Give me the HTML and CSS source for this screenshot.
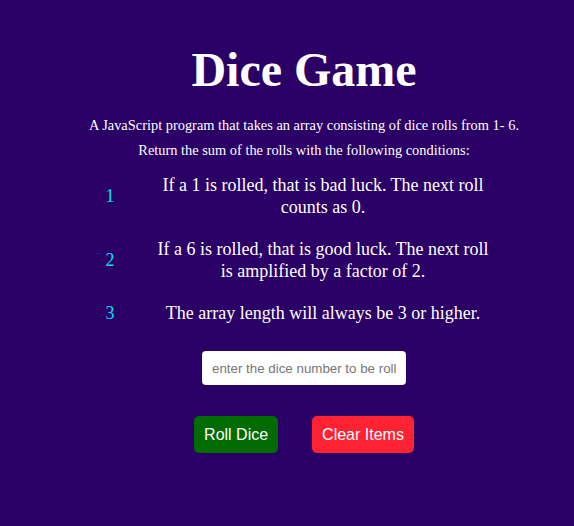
FILE: index.html
```html
<!DOCTYPE html>
<html>
<head>
<meta charset="utf-8">
<link rel="stylesheet" href="styles.css">
</head>
<body>
<main class="game">
  <h1 class="title">Dice Game</h1>
  <p class="intro">A JavaScript program that takes an array consisting of dice rolls from 1- 6.</p>
  <p class="intro">Return the sum of the rolls with the following conditions:</p>
  <ul class="rules">
    <li class="rule"><span class="num">1</span><span class="text">If a 1 is rolled, that is bad luck. The next roll counts as 0.</span></li>
    <li class="rule"><span class="num">2</span><span class="text">If a 6 is rolled, that is good luck. The next roll is amplified by a factor of 2.</span></li>
    <li class="rule"><span class="num">3</span><span class="text">The array length will always be 3 or higher.</span></li>
  </ul>
  <input class="dice-input" type="text" placeholder="enter the dice number to be rolled">
  <div class="actions">
    <button class="btn btn-roll">Roll Dice</button>
    <button class="btn btn-clear">Clear Items</button>
  </div>
</main>
</body>
</html>
```

FILE: styles.css
```css
html, body {
  margin: 0;
  padding: 0;
  background: #2a0066;
}
body {
  font-family: "Liberation Serif", "Times New Roman", serif;
  color: #ffffff;
  height: 526px;
}
.game {
  display: flex;
  flex-direction: column;
  align-items: center;
  padding-left: 34px;
  padding-top: 40px;
}
.title {
  font-size: 48px;
  font-weight: bold;
  margin: 0 0 13px 0;
  line-height: 60px;
}
.intro {
  font-size: 14.4px;
  margin: 0;
  line-height: 25px;
}
.rules {
  list-style: none;
  margin: 11px 0 0 0;
  padding: 0;
  display: flex;
  flex-direction: column;
  gap: 20px;
}
.rule {
  display: grid;
  grid-template-columns: 40px 340px;
  column-gap: 23px;
  align-items: center;
  margin-left: -25px;
}
.num {
  color: #00e0f0;
  font-size: 18px;
  text-align: center;
}
.text {
  font-size: 18px;
  line-height: 22px;
  text-align: center;
}
.dice-input {
  margin-top: 27px;
  width: 204px;
  height: 34px;
  box-sizing: border-box;
  border: none;
  border-radius: 4px;
  padding: 0 10px;
  font-family: "Liberation Sans", Arial, sans-serif;
  font-size: 13.33px;
  background: #ffffff;
  outline: none;
}
.dice-input::placeholder {
  color: #767676;
}
.actions {
  display: flex;
  gap: 34px;
  margin-top: 31px;
}
.btn {
  border: none;
  border-radius: 5px;
  height: 37px;
  padding: 0 10px;
  font-family: "Liberation Sans", Arial, sans-serif;
  font-size: 16px;
  color: #ffffff;
}
.btn-roll {
  background: #006b00;
}
.btn-clear {
  background: #ff2233;
}
```
